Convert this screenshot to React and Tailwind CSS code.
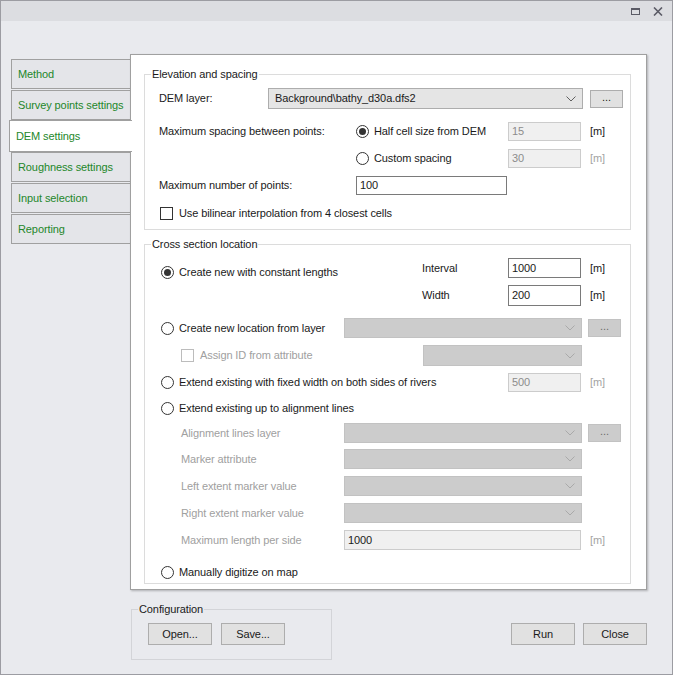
import React from "react";

const GREEN = "text-[#23872a]";

function Chevron({ disabled }) {
  return (
    <svg width="10" height="6" viewBox="0 0 10 6" className="shrink-0">
      <polyline
        points="0.5,0.5 5,5 9.5,0.5"
        fill="none"
        stroke={disabled ? "#a9a9a9" : "#606060"}
        strokeWidth="1"
      />
    </svg>
  );
}

function Combo({ value, width, height = 20, disabled }) {
  return (
    <div
      className={`flex items-center justify-between pl-[6px] pr-[6px] border ${
        disabled ? "bg-[#cccccc] border-[#c2c2c2]" : "bg-[#e5e5e5] border-[#adadad]"
      }`}
      style={{ width, height }}
    >
      <span className="truncate">{value}</span>
      <Chevron disabled={disabled} />
    </div>
  );
}

function Dots({ disabled }) {
  return (
    <div
      className={`w-[33px] h-[18px] border flex items-center justify-center leading-none pb-[3px] ${
        disabled ? "bg-[#cccccc] border-[#c2c2c2] text-[#6d6d6d]" : "bg-[#e1e1e1] border-[#adadad]"
      }`}
    >
      ...
    </div>
  );
}

function Field({ value, width, height = 19, disabled, dim }) {
  return (
    <div
      className={`flex items-center pl-[3px] border ${
        disabled ? "bg-[#f0f0f0] border-[#cccccc]" : "bg-white border-[#7a7a7a]"
      } ${dim ? "text-[#8c8c8c]" : ""}`}
      style={{ width, height }}
    >
      {value}
    </div>
  );
}

function Unit({ disabled }) {
  return <span className={`ml-[9px] ${disabled ? "text-[#a3a3a3]" : ""}`}>[m]</span>;
}

function Radio({ checked, label }) {
  return (
    <div className="flex items-center gap-[5px] h-[14px]">
      <span className="w-[13px] h-[13px] rounded-full border border-[#333] bg-white flex items-center justify-center shrink-0">
        {checked && <span className="w-[7px] h-[7px] rounded-full bg-[#333]" />}
      </span>
      <span className="whitespace-nowrap">{label}</span>
    </div>
  );
}

function Check({ label, disabled }) {
  return (
    <div className={`flex items-center gap-[6px] h-[14px] ${disabled ? "text-[#a0a0a0]" : ""}`}>
      <span
        className={`w-[13px] h-[13px] border bg-white shrink-0 ${
          disabled ? "border-[#bcbcbc]" : "border-[#333]"
        }`}
      />
      <span className="whitespace-nowrap">{label}</span>
    </div>
  );
}

function Group({ title, className, children, line = "border-[#dcdcdc]" }) {
  return (
    <fieldset className={`border ${line} ${className}`}>
      <legend className="ml-[6px] px-[1px] leading-[14px]">{title}</legend>
      {children}
    </fieldset>
  );
}

function Button({ children }) {
  return (
    <div className="w-[64px] h-[22px] border border-[#adadad] bg-[#e1e1e1] flex items-center justify-center">
      {children}
    </div>
  );
}

const tabs = [
  "Method",
  "Survey points settings",
  "DEM settings",
  "Roughness settings",
  "Input selection",
  "Reporting",
];

function Tabs({ active }) {
  return (
    <div className="w-[121px] mt-[5px] flex flex-col gap-[1px]">
      {tabs.map((t) =>
        t === active ? (
          <div
            key={t}
            className={`relative z-10 w-[123px] h-[32px] -my-px bg-white border border-r-0 border-[#a0a0a0] pl-[6px] flex items-center whitespace-nowrap ${GREEN}`}
          >
            {t}
          </div>
        ) : (
          <div
            key={t}
            className={`ml-[2px] h-[30px] bg-[#e4e5e9] border border-r-0 border-[#a0a0a0] pl-[6px] flex items-center whitespace-nowrap ${GREEN}`}
          >
            {t}
          </div>
        )
      )}
    </div>
  );
}

function ElevationGroup() {
  return (
    <Group title="Elevation and spacing" className="ml-[13px] mt-[12px] w-[487px]">
      <div className="pl-[14px] pb-[9px] flex flex-col">
        <div className="mt-[7px] h-[21px] flex items-center">
          <span className="w-[109px]">DEM layer:</span>
          <Combo value="Background\bathy_d30a.dfs2" width={315} height={21} />
          <div className="ml-[7px]">
            <Dots />
          </div>
        </div>
        <div className="mt-[13px] h-[19px] flex items-center">
          <span className="w-[197px]">Maximum spacing between points:</span>
          <div className="w-[152px]">
            <Radio checked label="Half cell size from DEM" />
          </div>
          <Field value="15" width={73} disabled dim />
          <Unit />
        </div>
        <div className="mt-[8px] h-[19px] flex items-center">
          <span className="w-[197px]" />
          <div className="w-[152px]">
            <Radio label="Custom spacing" />
          </div>
          <Field value="30" width={73} disabled dim />
          <Unit disabled />
        </div>
        <div className="mt-[8px] h-[19px] flex items-center">
          <span className="w-[197px]">Maximum number of points:</span>
          <Field value="100" width={151} />
        </div>
        <div className="mt-[11px] ml-px">
          <Check label="Use bilinear interpolation from 4 closest cells" />
        </div>
      </div>
    </Group>
  );
}

function SubRow({ label, children, className }) {
  return (
    <div className={`h-[20px] flex items-center ${className}`}>
      <span className="w-[183px] pl-[20px] text-[#a0a0a0] whitespace-nowrap">{label}</span>
      {children}
    </div>
  );
}

function CrossSectionGroup() {
  return (
    <Group title="Cross section location" className="ml-[13px] mt-[7px] w-[487px]">
      <div className="pl-[16px] pb-[4px] flex flex-col">
        <div className="mt-[7px] flex items-start">
          <div className="w-[261px] pt-[7px]">
            <Radio checked label="Create new with constant lengths" />
          </div>
          <div className="flex flex-col gap-[7px]">
            <div className="h-[20px] flex items-center">
              <span className="w-[86px]">Interval</span>
              <Field value="1000" width={73} height={20} />
              <Unit />
            </div>
            <div className="h-[21px] flex items-center">
              <span className="w-[86px]">Width</span>
              <Field value="200" width={73} height={21} />
              <Unit />
            </div>
          </div>
        </div>

        <div className="mt-[12px] h-[20px] flex items-center">
          <div className="w-[183px]">
            <Radio label="Create new location from layer" />
          </div>
          <Combo width={238} disabled />
          <div className="ml-[6px]">
            <Dots disabled />
          </div>
        </div>

        <div className="mt-[7px] h-[21px] flex items-center">
          <div className="w-[262px] pl-[20px]">
            <Check label="Assign ID from attribute" disabled />
          </div>
          <Combo width={159} height={21} disabled />
        </div>

        <div className="mt-[7px] h-[19px] flex items-center">
          <div className="w-[347px]">
            <Radio label="Extend existing with fixed width on both sides of rivers" />
          </div>
          <Field value="500" width={73} disabled dim />
          <Unit disabled />
        </div>

        <div className="mt-[9px]">
          <Radio label="Extend existing up to alignment lines" />
        </div>

        <SubRow label="Alignment lines layer" className="mt-[8px]">
          <Combo width={238} disabled />
          <div className="ml-[6px]">
            <Dots disabled />
          </div>
        </SubRow>
        <SubRow label="Marker attribute" className="mt-[6px]">
          <Combo width={238} disabled />
        </SubRow>
        <SubRow label="Left extent marker value" className="mt-[7px]">
          <Combo width={238} disabled />
        </SubRow>
        <SubRow label="Right extent marker value" className="mt-[7px]">
          <Combo width={238} disabled />
        </SubRow>
        <SubRow label="Maximum length per side" className="mt-[7px]">
          <Field value="1000" width={237} height={20} disabled />
          <Unit disabled />
        </SubRow>

        <div className="mt-[15px]">
          <Radio label="Manually digitize on map" />
        </div>
      </div>
    </Group>
  );
}

export default function App() {
  return (
    <div className="w-[673px] h-[675px] border border-[#9c9ca2] bg-[#e9eaee] flex flex-col font-['Liberation_Sans',Arial,sans-serif] text-[11px] tracking-[-0.1px] text-[#1a1a1a] overflow-hidden">
      <div className="h-[20px] bg-[#dcdde1] flex items-center justify-end gap-[13px] pr-[9px] shrink-0">
        <span className="w-[9px] h-[7px] border border-t-2 border-[#5b5b66]" />
        <svg width="10" height="9" viewBox="0 0 10 9">
          <path d="M1 0.5 L9 8.5 M9 0.5 L1 8.5" stroke="#5b5b66" strokeWidth="1.6" />
        </svg>
      </div>

      <div className="flex items-start pt-[33px] pl-[8px]">
        <Tabs active="DEM settings" />

        <div className="flex flex-col">
          <div className="w-[517px] h-[536px] bg-white border border-[#a0a0a0] shadow-[1px_1px_2px_rgba(0,0,0,0.25)]">
            <ElevationGroup />
            <CrossSectionGroup />
          </div>

          <div className="flex items-start justify-between mt-[12px]">
            <Group title="Configuration" className="ml-px w-[201px]" line="border-[#d3d4d8]">
              <div className="pl-[16px] pt-[7px] pb-[14px] flex gap-[9px]">
                <Button>Open...</Button>
                <Button>Save...</Button>
              </div>
            </Group>
            <div className="mt-[21px] flex gap-[8px]">
              <Button>Run</Button>
              <Button>Close</Button>
            </div>
          </div>
        </div>
      </div>
    </div>
  );
}
